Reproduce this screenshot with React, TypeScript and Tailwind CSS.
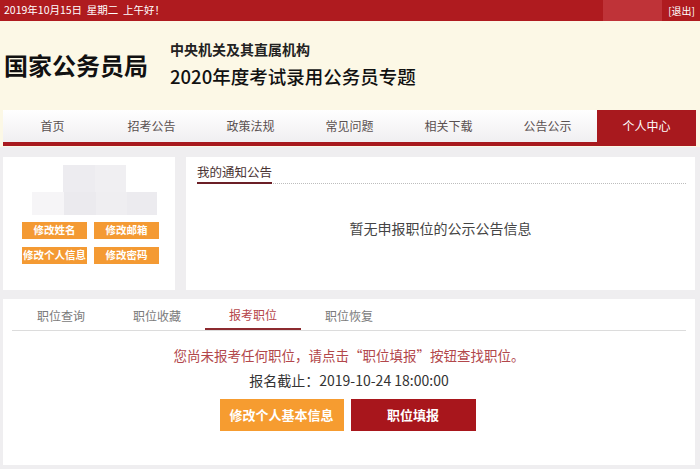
import React from "react";

const navItems = ["首页", "招考公告", "政策法规", "常见问题", "相关下载", "公告公示", "个人中心"];
const tabs = ["职位查询", "职位收藏", "报考职位", "职位恢复"];

export default function App() {
  return (
    <div className="w-[700px] h-[469px] overflow-hidden bg-[#efeef0] font-['Noto_Sans_CJK_SC','Noto_Sans',sans-serif]">
      {/* top bar */}
      <div className="h-[21px] bg-[#af1b1f] flex items-center justify-between pl-[4px] pr-[5px] text-white">
        <span className="text-[10.5px] leading-none">2019年10月15日&nbsp;&nbsp;星期二&nbsp;&nbsp;上午好！</span>
        <div className="flex items-center h-full">
          <div className="w-[59px] h-full bg-[#bf3338]" />
          <span className="ml-[6px] text-[10px] leading-none">[退出]</span>
        </div>
      </div>

      {/* header */}
      <div className="bg-[#fcf8e6] pb-px">
        <div className="h-[89px] flex items-center pl-[4px]">
          <div className="-mt-[2px] text-[24px] leading-none font-bold text-[#111]">国家公务员局</div>
          <div className="ml-[22px] flex flex-col -mt-[4px]">
            <div className="text-[14px] leading-[16px] font-bold text-[#222]">中央机关及其直属机构</div>
            <div className="mt-[8px] text-[18.5px] leading-[22px] font-medium text-[#111]">2020年度考试录用公务员专题</div>
          </div>
        </div>
        <div className="ml-[3px] mr-[4px] border-b-[4px] border-[#a8191e] bg-linear-to-b from-white to-[#f0eff1] flex">
          {navItems.map((n, i) =>
            i === navItems.length - 1 ? (
              <div key={n} className="flex-1 h-[32px] bg-[#a8191e] flex items-center justify-center text-[12px] text-white">
                {n}
              </div>
            ) : (
              <div key={n} className="flex-1 h-[32px] flex items-center justify-center text-[12px] text-[#5a5050]">
                {n}
              </div>
            )
          )}
        </div>
      </div>

      {/* main */}
      <div className="pl-[3px] pr-[5px] pt-[10px]">
        <div className="flex gap-[11px] h-[133px]">
          <div className="w-[172px] bg-white flex flex-col items-center pt-[8px]">
            <div className="flex flex-col items-center ml-[11px]">
              <div className="flex">
                <div className="w-[32px] h-[27px] bg-[#edecf0]" />
                <div className="w-[31px] h-[27px] bg-[#f0eff2]" />
              </div>
              <div className="flex">
                <div className="w-[32px] h-[23px] bg-[#f6f5f7]" />
                <div className="w-[32px] h-[23px] bg-[#ebeaee]" />
                <div className="w-[31px] h-[23px] bg-[#efeef1]" />
                <div className="w-[30px] h-[23px] bg-[#ecebef]" />
              </div>
            </div>
            <div className="mt-[7px] grid grid-cols-2 gap-x-[7px] gap-y-[8px] ml-[3px]">
              {["修改姓名", "修改邮箱", "修改个人信息", "修改密码"].map((b) => (
                <div key={b} className="w-[65px] h-[17px] bg-[#f49a33] text-white text-[10.5px] font-bold flex items-center justify-center leading-none">
                  {b}
                </div>
              ))}
            </div>
          </div>
          <div className="flex-1 bg-white flex flex-col">
            <div className="ml-[11px] mr-[9px] mt-[7px] border-b border-dotted border-[#bdbdbd] flex">
              <div className="text-[12.5px] leading-[16px] text-[#4a3333] border-b-2 border-[#6b1f26] -mb-px pb-[2px]">我的通知公告</div>
            </div>
            <div className="mt-[34px] text-center text-[14px] leading-[20px] text-[#444]">暂无申报职位的公示公告信息</div>
          </div>
        </div>

        <div className="mt-[9px] h-[166px] bg-white flex flex-col">
          <div className="mx-[9px] border-b border-[#dcdcdc] flex pl-px">
            {tabs.map((t, i) =>
              i === 2 ? (
                <div key={t} className="w-[96px] h-[31px] pt-[2px] flex items-center justify-center text-[12px] text-[#b5464a] border-b-2 border-[#8c2a2f] -mb-px">
                  {t}
                </div>
              ) : (
                <div key={t} className="w-[96px] h-[31px] pt-[2px] flex items-center justify-center text-[12px] text-[#7a7a7a]">
                  {t}
                </div>
              )
            )}
          </div>
          <div className="mt-[14px] text-center text-[13.5px] leading-[20px] text-[#b2474b]">
            您尚未报考任何职位，请点击“职位填报”按钮查找职位。
          </div>
          <div className="mt-[5px] text-center text-[14px] leading-[20px] text-[#333]">报名截止：2019-10-24 18:00:00</div>
          <div className="mt-[9px] flex justify-center gap-[7px] pr-[3px]">
            <div className="w-[124px] h-[32px] bg-[#f69c30] text-white text-[13px] font-bold flex items-center justify-center">修改个人基本信息</div>
            <div className="w-[125px] h-[32px] bg-[#a8161c] text-white text-[13px] font-bold flex items-center justify-center">职位填报</div>
          </div>
        </div>
      </div>
    </div>
  );
}
